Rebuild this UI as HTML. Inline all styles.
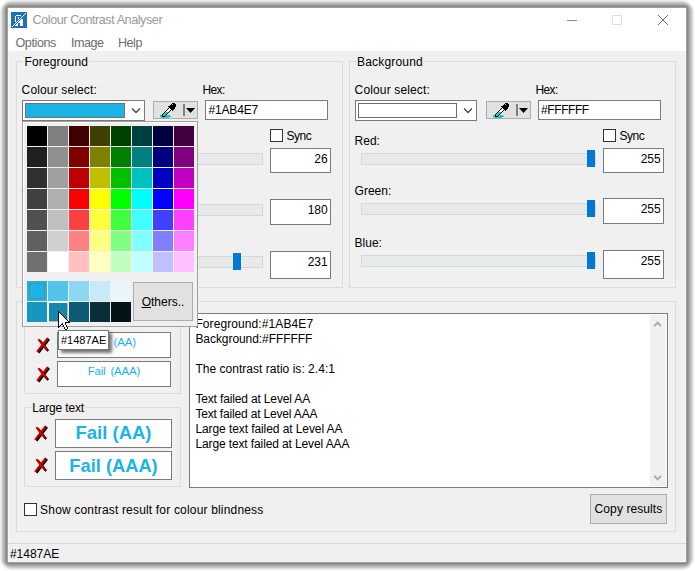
<!DOCTYPE html>
<html><head><meta charset="utf-8"><style>
html,body{margin:0;padding:0;background:#fff;width:695px;height:571px;overflow:hidden;position:relative;font-family:"Liberation Sans",sans-serif;}
.a{position:absolute;}
.t{position:absolute;line-height:1;white-space:nowrap;}
</style></head><body>
<div class="a" style="left:-1px;top:-1px;width:696px;height:572px;background:rgb(250,250,250);border-radius:14.4px;"></div>
<div class="a" style="left:0px;top:0px;width:694px;height:570px;background:rgb(238,238,238);border-radius:12.8px;"></div>
<div class="a" style="left:1px;top:1px;width:692px;height:568px;background:rgb(221,221,221);border-radius:11.2px;"></div>
<div class="a" style="left:2px;top:2px;width:690px;height:566px;background:rgb(202,202,202);border-radius:9.6px;"></div>
<div class="a" style="left:3px;top:3px;width:688px;height:564px;background:rgb(184,184,184);border-radius:8.0px;"></div>
<div class="a" style="left:4px;top:4px;width:686px;height:562px;background:rgb(168,168,168);border-radius:6.4px;"></div>
<div class="a" style="left:5px;top:5px;width:684px;height:560px;background:rgb(153,153,153);border-radius:4.8px;"></div>
<div class="a" style="left:6px;top:6px;width:682px;height:558px;background:rgb(136,136,136);border-radius:3.2px;"></div>
<div class="a" style="left:7px;top:7px;width:680px;height:556px;background:rgb(160,160,160);border-radius:1.6px;"></div>
<div class="a" style="left:8px;top:8px;width:678px;height:554px;background:#f0f0f0;box-shadow:inset 0 0 0 1px #f5f5f5;"></div>
<div class="a" style="left:8px;top:8px;width:678px;height:43px;background:#fff;"></div>
<div class="a" style="left:11px;top:12px;width:16px;height:16px;background:#1f70c1;"></div>
<svg class="a" style="left:11px;top:12px" width="16" height="16" viewBox="0 0 16 16" shape-rendering="crispEdges"><rect x="14" y="1" width="1" height="1" fill="#ffffff"/><rect x="13" y="2" width="1" height="1" fill="#ffffff"/><rect x="5" y="3" width="5" height="1" fill="#ffffff"/><rect x="12" y="3" width="1" height="1" fill="#ffffff"/><rect x="4" y="4" width="1" height="1" fill="#ffffff"/><rect x="11" y="4" width="1" height="1" fill="#ffffff"/><rect x="4" y="5" width="1" height="1" fill="#ffffff"/><rect x="7" y="5" width="1" height="1" fill="#ffffff"/><rect x="10" y="5" width="1" height="1" fill="#ffffff"/><rect x="4" y="6" width="1" height="1" fill="#ffffff"/><rect x="7" y="6" width="1" height="1" fill="#ffffff"/><rect x="9" y="6" width="1" height="1" fill="#ffffff"/><rect x="4" y="7" width="1" height="1" fill="#ffffff"/><rect x="8" y="7" width="1" height="1" fill="#ffffff"/><rect x="10" y="7" width="2" height="1" fill="#ffffff"/><rect x="4" y="8" width="1" height="1" fill="#ffffff"/><rect x="7" y="8" width="1" height="1" fill="#ffffff"/><rect x="9" y="8" width="3" height="1" fill="#ffffff"/><rect x="4" y="9" width="1" height="1" fill="#ffffff"/><rect x="6" y="9" width="1" height="1" fill="#ffffff"/><rect x="8" y="9" width="4" height="1" fill="#ffffff"/><rect x="5" y="10" width="1" height="1" fill="#ffffff"/><rect x="7" y="10" width="5" height="1" fill="#ffffff"/><rect x="4" y="11" width="1" height="1" fill="#ffffff"/><rect x="6" y="11" width="1" height="1" fill="#ffffff"/><rect x="9" y="11" width="3" height="1" fill="#ffffff"/><rect x="3" y="12" width="1" height="1" fill="#ffffff"/><rect x="5" y="12" width="2" height="1" fill="#ffffff"/><rect x="9" y="12" width="3" height="1" fill="#ffffff"/><rect x="2" y="13" width="1" height="1" fill="#ffffff"/><rect x="4" y="13" width="3" height="1" fill="#ffffff"/><rect x="9" y="13" width="3" height="1" fill="#ffffff"/><rect x="1" y="14" width="1" height="1" fill="#ffffff"/></svg>
<div class="t" style="left:32.6px;top:13.63px;font-size:12.6px;color:#9a9a9a;letter-spacing:-0.435px;">Colour Contrast Analyser</div>
<div class="t" style="left:15.4px;top:36.73px;font-size:12.6px;color:#6d6d6d;letter-spacing:-0.400px;">Options</div>
<div class="t" style="left:71.1px;top:36.73px;font-size:12.6px;color:#6d6d6d;letter-spacing:-0.550px;">Image</div>
<div class="t" style="left:118px;top:36.73px;font-size:12.6px;color:#6d6d6d;letter-spacing:-0.500px;">Help</div>
<div class="a" style="left:567px;top:20px;width:10px;height:1px;background:#8a8a8a;"></div>
<div class="a" style="left:612px;top:15px;width:10px;height:10px;border:1px solid #dedede;box-sizing:border-box;"></div>
<svg class="a" style="left:657px;top:14px" width="12" height="12" viewBox="0 0 12 12"><path d="M1 1L11 11M11 1L1 11" stroke="#6e6e6e" stroke-width="1"/></svg>
<div class="a" style="left:16px;top:61px;width:327px;height:227px;border:1px solid #dcdcdc;box-sizing:border-box;"></div>
<div class="t" style="left:24.4px;top:55.64px;font-size:12px;color:#000;letter-spacing:0.167px;background:#f0f0f0;padding:0 1px;margin-left:-1px;">Foreground</div>
<div class="a" style="left:349px;top:61px;width:327px;height:227px;border:1px solid #dcdcdc;box-sizing:border-box;"></div>
<div class="t" style="left:357.1px;top:55.64px;font-size:12px;color:#000;letter-spacing:0.167px;background:#f0f0f0;padding:0 1px;margin-left:-1px;">Background</div>
<div class="a" style="left:16px;top:301px;width:660px;height:231px;border:1px solid #dcdcdc;box-sizing:border-box;"></div>
<div class="a" style="left:24px;top:315px;width:157px;height:79px;border:1px solid #dcdcdc;box-sizing:border-box;"></div>
<div class="t" style="left:32.2px;top:309.34px;font-size:12px;color:#000;background:#f0f0f0;padding:0 1px;margin-left:-1px;">Normal text</div>
<div class="a" style="left:24px;top:407px;width:157px;height:80px;border:1px solid #dcdcdc;box-sizing:border-box;"></div>
<div class="t" style="left:32.2px;top:401.64px;font-size:12px;color:#000;letter-spacing:-0.156px;background:#f0f0f0;padding:0 1px;margin-left:-1px;">Large text</div>
<div class="t" style="left:21.600000000000023px;top:83.54px;font-size:12px;color:#000;letter-spacing:0.138px;">Colour select:</div>
<div class="t" style="left:202.39999999999998px;top:83.84px;font-size:12px;color:#000;letter-spacing:-0.600px;">Hex:</div>
<div class="a" style="left:22px;top:100px;width:123px;height:21px;background:#fff;border:1px solid #7a7a7a;box-sizing:border-box;"></div>
<div class="a" style="left:25px;top:103px;width:100px;height:15px;background:#1ab4e7;border:1px solid #7a7070;box-sizing:border-box;"></div>
<svg class="a" style="left:131px;top:107px" width="10" height="7" viewBox="0 0 10 7"><path d="M1 1.5L5 5.5L9 1.5" stroke="#444" stroke-width="1.3" fill="none"/></svg>
<div class="a" style="left:153px;top:101px;width:45px;height:18px;background:#e1e1e1;border:1px solid #adadad;box-sizing:border-box;"></div>
<svg class="a" style="left:157px;top:101px" width="22" height="17" viewBox="0 0 22 17" shape-rendering="crispEdges"><rect x="15" y="2" width="3" height="1" fill="#000"/><rect x="14" y="3" width="1" height="1" fill="#000"/><rect x="15" y="3" width="1" height="1" fill="#b0b0b0"/><rect x="16" y="3" width="3" height="1" fill="#000"/><rect x="13" y="4" width="6" height="1" fill="#000"/><rect x="11" y="5" width="8" height="1" fill="#000"/><rect x="12" y="6" width="6" height="1" fill="#000"/><rect x="11" y="7" width="1" height="1" fill="#000"/><rect x="12" y="7" width="1" height="1" fill="#fff"/><rect x="13" y="7" width="5" height="1" fill="#000"/><rect x="10" y="8" width="1" height="1" fill="#000"/><rect x="11" y="8" width="3" height="1" fill="#fff"/><rect x="14" y="8" width="3" height="1" fill="#000"/><rect x="9" y="9" width="1" height="1" fill="#000"/><rect x="10" y="9" width="3" height="1" fill="#fff"/><rect x="13" y="9" width="1" height="1" fill="#000"/><rect x="15" y="9" width="1" height="1" fill="#000"/><rect x="8" y="10" width="1" height="1" fill="#000"/><rect x="9" y="10" width="3" height="1" fill="#fff"/><rect x="12" y="10" width="1" height="1" fill="#000"/><rect x="7" y="11" width="1" height="1" fill="#000"/><rect x="8" y="11" width="3" height="1" fill="#10d0d0"/><rect x="11" y="11" width="1" height="1" fill="#000"/><rect x="6" y="12" width="1" height="1" fill="#000"/><rect x="7" y="12" width="3" height="1" fill="#10d0d0"/><rect x="10" y="12" width="1" height="1" fill="#000"/><rect x="5" y="13" width="1" height="1" fill="#000"/><rect x="6" y="13" width="3" height="1" fill="#10d0d0"/><rect x="9" y="13" width="1" height="1" fill="#000"/><rect x="3" y="14" width="2" height="1" fill="#22c2c2"/><rect x="5" y="14" width="1" height="1" fill="#000"/><rect x="6" y="14" width="2" height="1" fill="#10d0d0"/><rect x="8" y="14" width="1" height="1" fill="#000"/><rect x="9" y="14" width="4" height="1" fill="#22c2c2"/><rect x="3" y="15" width="2" height="1" fill="#22c2c2"/><rect x="5" y="15" width="3" height="1" fill="#000"/><rect x="8" y="15" width="6" height="1" fill="#22c2c2"/><rect x="4" y="16" width="8" height="1" fill="#22c2c2"/></svg>
<div class="a" style="left:183px;top:104px;width:2px;height:12px;background:#808080;"></div>
<svg class="a" style="left:186px;top:108px" width="9" height="5" viewBox="0 0 9 5"><path d="M0 0H9L4.5 5Z" fill="#000"/></svg>
<div class="a" style="left:205px;top:100px;width:123px;height:20px;background:#fff;border:1px solid #7a7a7a;box-sizing:border-box;"></div>
<div class="t" style="left:354.6px;top:83.54px;font-size:12px;color:#000;letter-spacing:0.138px;">Colour select:</div>
<div class="t" style="left:535.4px;top:83.84px;font-size:12px;color:#000;letter-spacing:-0.600px;">Hex:</div>
<div class="a" style="left:355px;top:100px;width:122px;height:21px;background:#fff;border:1px solid #7a7a7a;box-sizing:border-box;"></div>
<div class="a" style="left:358px;top:103px;width:99px;height:15px;background:#ffffff;border:1px solid #6e6e6e;box-sizing:border-box;"></div>
<svg class="a" style="left:463px;top:107px" width="10" height="7" viewBox="0 0 10 7"><path d="M1 1.5L5 5.5L9 1.5" stroke="#444" stroke-width="1.3" fill="none"/></svg>
<div class="a" style="left:486px;top:101px;width:45px;height:18px;background:#e1e1e1;border:1px solid #adadad;box-sizing:border-box;"></div>
<svg class="a" style="left:490px;top:101px" width="22" height="17" viewBox="0 0 22 17" shape-rendering="crispEdges"><rect x="15" y="2" width="3" height="1" fill="#000"/><rect x="14" y="3" width="1" height="1" fill="#000"/><rect x="15" y="3" width="1" height="1" fill="#b0b0b0"/><rect x="16" y="3" width="3" height="1" fill="#000"/><rect x="13" y="4" width="6" height="1" fill="#000"/><rect x="11" y="5" width="8" height="1" fill="#000"/><rect x="12" y="6" width="6" height="1" fill="#000"/><rect x="11" y="7" width="1" height="1" fill="#000"/><rect x="12" y="7" width="1" height="1" fill="#fff"/><rect x="13" y="7" width="5" height="1" fill="#000"/><rect x="10" y="8" width="1" height="1" fill="#000"/><rect x="11" y="8" width="3" height="1" fill="#fff"/><rect x="14" y="8" width="3" height="1" fill="#000"/><rect x="9" y="9" width="1" height="1" fill="#000"/><rect x="10" y="9" width="3" height="1" fill="#fff"/><rect x="13" y="9" width="1" height="1" fill="#000"/><rect x="15" y="9" width="1" height="1" fill="#000"/><rect x="8" y="10" width="1" height="1" fill="#000"/><rect x="9" y="10" width="3" height="1" fill="#fff"/><rect x="12" y="10" width="1" height="1" fill="#000"/><rect x="7" y="11" width="1" height="1" fill="#000"/><rect x="8" y="11" width="3" height="1" fill="#10d0d0"/><rect x="11" y="11" width="1" height="1" fill="#000"/><rect x="6" y="12" width="1" height="1" fill="#000"/><rect x="7" y="12" width="3" height="1" fill="#10d0d0"/><rect x="10" y="12" width="1" height="1" fill="#000"/><rect x="5" y="13" width="1" height="1" fill="#000"/><rect x="6" y="13" width="3" height="1" fill="#10d0d0"/><rect x="9" y="13" width="1" height="1" fill="#000"/><rect x="3" y="14" width="2" height="1" fill="#22c2c2"/><rect x="5" y="14" width="1" height="1" fill="#000"/><rect x="6" y="14" width="2" height="1" fill="#10d0d0"/><rect x="8" y="14" width="1" height="1" fill="#000"/><rect x="9" y="14" width="4" height="1" fill="#22c2c2"/><rect x="3" y="15" width="2" height="1" fill="#22c2c2"/><rect x="5" y="15" width="3" height="1" fill="#000"/><rect x="8" y="15" width="6" height="1" fill="#22c2c2"/><rect x="4" y="16" width="8" height="1" fill="#22c2c2"/></svg>
<div class="a" style="left:516px;top:104px;width:2px;height:12px;background:#808080;"></div>
<svg class="a" style="left:519px;top:108px" width="9" height="5" viewBox="0 0 9 5"><path d="M0 0H9L4.5 5Z" fill="#000"/></svg>
<div class="a" style="left:538px;top:100px;width:123px;height:20px;background:#fff;border:1px solid #7a7a7a;box-sizing:border-box;"></div>
<div class="t" style="left:541.1px;top:103.94px;font-size:12px;color:#000;letter-spacing:-0.433px;">#FFFFFF</div>
<div class="t" style="left:208.5px;top:103.94px;font-size:12px;color:#000;letter-spacing:-0.167px;">#1AB4E7</div>
<div class="t" style="left:21.600000000000023px;top:135.04px;font-size:12px;color:#000;">Red:</div>
<div class="t" style="left:21.600000000000023px;top:185.14px;font-size:12px;color:#000;">Green:</div>
<div class="t" style="left:21.600000000000023px;top:236.84px;font-size:12px;color:#000;">Blue:</div>
<div class="a" style="left:270px;top:129px;width:13px;height:13px;background:#fff;border:1px solid #333;box-sizing:border-box;"></div>
<div class="t" style="left:286.5px;top:130.14px;font-size:12px;color:#000;letter-spacing:-0.467px;">Sync</div>
<div class="a" style="left:28px;top:153px;width:235px;height:12px;background:#e7eaea;border:1px solid #d6d6d6;box-sizing:border-box;"></div>
<div class="a" style="left:51px;top:150px;width:8px;height:17px;background:#0078d7;"></div>
<div class="a" style="left:270px;top:148px;width:61px;height:25px;background:#fff;border:1px solid #7a7a7a;box-sizing:border-box;"></div>
<div class="t" style="right:367.29999999999995px;top:152.64px;font-size:12px;color:#000;">26</div>
<div class="a" style="left:28px;top:204px;width:235px;height:12px;background:#e7eaea;border:1px solid #d6d6d6;box-sizing:border-box;"></div>
<div class="a" style="left:188px;top:201px;width:8px;height:17px;background:#0078d7;"></div>
<div class="a" style="left:270px;top:199px;width:61px;height:26px;background:#fff;border:1px solid #7a7a7a;box-sizing:border-box;"></div>
<div class="t" style="right:367.29999999999995px;top:203.94px;font-size:12px;color:#000;">180</div>
<div class="a" style="left:28px;top:256px;width:235px;height:12px;background:#e7eaea;border:1px solid #d6d6d6;box-sizing:border-box;"></div>
<div class="a" style="left:233px;top:253px;width:8px;height:17px;background:#0078d7;"></div>
<div class="a" style="left:270px;top:251px;width:61px;height:28px;background:#fff;border:1px solid #7a7a7a;box-sizing:border-box;"></div>
<div class="t" style="right:367.29999999999995px;top:255.94px;font-size:12px;color:#000;">231</div>
<div class="t" style="left:354.6px;top:135.04px;font-size:12px;color:#000;">Red:</div>
<div class="t" style="left:354.6px;top:185.14px;font-size:12px;color:#000;">Green:</div>
<div class="t" style="left:354.6px;top:236.84px;font-size:12px;color:#000;">Blue:</div>
<div class="a" style="left:603px;top:129px;width:13px;height:13px;background:#fff;border:1px solid #333;box-sizing:border-box;"></div>
<div class="t" style="left:619.5px;top:130.14px;font-size:12px;color:#000;letter-spacing:-0.467px;">Sync</div>
<div class="a" style="left:361px;top:153px;width:235px;height:12px;background:#e7eaea;border:1px solid #d6d6d6;box-sizing:border-box;"></div>
<div class="a" style="left:587px;top:150px;width:8px;height:17px;background:#0078d7;"></div>
<div class="a" style="left:603px;top:148px;width:61px;height:25px;background:#fff;border:1px solid #7a7a7a;box-sizing:border-box;"></div>
<div class="t" style="right:34.299999999999955px;top:152.64px;font-size:12px;color:#000;">255</div>
<div class="a" style="left:361px;top:203px;width:235px;height:12px;background:#e7eaea;border:1px solid #d6d6d6;box-sizing:border-box;"></div>
<div class="a" style="left:587px;top:200px;width:8px;height:17px;background:#0078d7;"></div>
<div class="a" style="left:603px;top:198px;width:61px;height:26px;background:#fff;border:1px solid #7a7a7a;box-sizing:border-box;"></div>
<div class="t" style="right:34.299999999999955px;top:202.94px;font-size:12px;color:#000;">255</div>
<div class="a" style="left:361px;top:255px;width:235px;height:12px;background:#e7eaea;border:1px solid #d6d6d6;box-sizing:border-box;"></div>
<div class="a" style="left:587px;top:252px;width:8px;height:17px;background:#0078d7;"></div>
<div class="a" style="left:603px;top:250px;width:61px;height:29px;background:#fff;border:1px solid #7a7a7a;box-sizing:border-box;"></div>
<div class="t" style="right:34.299999999999955px;top:254.94px;font-size:12px;color:#000;">255</div>
<svg class="a" style="left:36px;top:337px" width="16" height="18" viewBox="0 0 16 18"><g fill="none" stroke-linecap="butt"><path d="M2.6 2.4L11 13M11.9 1.1L1.3 14.8" stroke="#000" stroke-width="2.3" transform="translate(1.2,1.0)"/><path d="M2.6 2.4L11 13M11.9 1.1L1.3 14.8" stroke="#b80000" stroke-width="2.2"/><path d="M2.6 2.4L11 13M11.9 1.1L1.3 14.8" stroke="#f00000" stroke-width="0.8" transform="translate(-0.55,-0.45)"/></g></svg>
<svg class="a" style="left:36px;top:366px" width="16" height="18" viewBox="0 0 16 18"><g fill="none" stroke-linecap="butt"><path d="M2.6 2.4L11 13M11.9 1.1L1.3 14.8" stroke="#000" stroke-width="2.3" transform="translate(1.2,1.0)"/><path d="M2.6 2.4L11 13M11.9 1.1L1.3 14.8" stroke="#b80000" stroke-width="2.2"/><path d="M2.6 2.4L11 13M11.9 1.1L1.3 14.8" stroke="#f00000" stroke-width="0.8" transform="translate(-0.55,-0.45)"/></g></svg>
<div class="a" style="left:57px;top:332px;width:114px;height:26px;background:#fff;border:1px solid #7a7a7a;box-sizing:border-box;"></div>
<div class="a" style="left:57px;top:361px;width:114px;height:26px;background:#fff;border:1px solid #7a7a7a;box-sizing:border-box;"></div>
<div class="t" style="left:90.9px;top:337.37px;font-size:11.5px;color:#1ab4e7;word-spacing:2.0px;letter-spacing:-0.2px;">Fail (AA)</div>
<div class="t" style="left:87.7px;top:366.47px;font-size:11.5px;color:#1ab4e7;word-spacing:2.0px;letter-spacing:-0.2px;">Fail (AAA)</div>
<svg class="a" style="left:34px;top:425px" width="16" height="18" viewBox="0 0 16 18"><g fill="none" stroke-linecap="butt"><path d="M2.6 2.4L11 13M11.9 1.1L1.3 14.8" stroke="#000" stroke-width="2.3" transform="translate(1.2,1.0)"/><path d="M2.6 2.4L11 13M11.9 1.1L1.3 14.8" stroke="#b80000" stroke-width="2.2"/><path d="M2.6 2.4L11 13M11.9 1.1L1.3 14.8" stroke="#f00000" stroke-width="0.8" transform="translate(-0.55,-0.45)"/></g></svg>
<svg class="a" style="left:34px;top:457px" width="16" height="18" viewBox="0 0 16 18"><g fill="none" stroke-linecap="butt"><path d="M2.6 2.4L11 13M11.9 1.1L1.3 14.8" stroke="#000" stroke-width="2.3" transform="translate(1.2,1.0)"/><path d="M2.6 2.4L11 13M11.9 1.1L1.3 14.8" stroke="#b80000" stroke-width="2.2"/><path d="M2.6 2.4L11 13M11.9 1.1L1.3 14.8" stroke="#f00000" stroke-width="0.8" transform="translate(-0.55,-0.45)"/></g></svg>
<div class="a" style="left:55px;top:419px;width:117px;height:29px;background:#fff;border:1px solid #7a7a7a;box-sizing:border-box;"></div>
<div class="a" style="left:55px;top:451px;width:117px;height:29px;background:#fff;border:1px solid #7a7a7a;box-sizing:border-box;"></div>
<div class="t" style="left:55.0px;width:117px;text-align:center;top:424.44px;font-size:18.5px;color:#1ab4e7;font-weight:bold;">Fail (AA)</div>
<div class="t" style="left:55.0px;width:117px;text-align:center;top:456.51px;font-size:18.3px;color:#1ab4e7;font-weight:bold;">Fail (AAA)</div>
<div class="a" style="left:189px;top:313px;width:479px;height:175px;background:#fff;border:1px solid #7a7a7a;box-sizing:border-box;"></div>
<div class="a" style="left:650px;top:315px;width:16px;height:171px;background:#f0f0f0;"></div>
<svg class="a" style="left:653px;top:320px" width="9" height="8" viewBox="0 0 9 8"><path d="M1.3 6.2L4.6 2.6L7.9 6.2" stroke="#a6a6a6" stroke-width="1.8" fill="none"/></svg>
<svg class="a" style="left:653px;top:474px" width="9" height="8" viewBox="0 0 9 8"><path d="M1.3 1.8L4.6 5.4L7.9 1.8" stroke="#a6a6a6" stroke-width="1.8" fill="none"/></svg>
<div class="t" style="left:195.4px;top:317.64px;font-size:12px;color:#000;letter-spacing:0.094px;">Foreground:#1AB4E7</div>
<div class="t" style="left:195.4px;top:332.64px;font-size:12px;color:#000;letter-spacing:-0.059px;">Background:#FFFFFF</div>
<div class="t" style="left:195.4px;top:362.64px;font-size:12px;color:#000;letter-spacing:0.030px;">The contrast ratio is: 2.4:1</div>
<div class="t" style="left:195.4px;top:392.64px;font-size:12px;color:#000;letter-spacing:-0.150px;">Text failed at Level AA</div>
<div class="t" style="left:195.4px;top:407.64px;font-size:12px;color:#000;letter-spacing:-0.174px;">Text failed at Level AAA</div>
<div class="t" style="left:195.4px;top:422.64px;font-size:12px;color:#000;letter-spacing:-0.082px;">Large text failed at Level AA</div>
<div class="t" style="left:195.4px;top:437.64px;font-size:12px;color:#000;letter-spacing:-0.117px;">Large text failed at Level AAA</div>
<div class="a" style="left:590px;top:494px;width:77px;height:30px;background:#e1e1e1;border:1px solid #adadad;box-sizing:border-box;"></div>
<div class="t" style="left:590.0px;width:77px;text-align:center;top:502.84px;font-size:12px;color:#000;letter-spacing:0.091px;">Copy results</div>
<div class="a" style="left:24px;top:503px;width:13px;height:13px;background:#fff;border:1px solid #333;box-sizing:border-box;"></div>
<div class="t" style="left:40.1px;top:504.04px;font-size:12px;color:#000;letter-spacing:0.177px;">Show contrast result for colour blindness</div>
<div class="a" style="left:8px;top:543px;width:678px;height:1px;background:#d7d7d7;"></div>
<div class="t" style="left:9.9px;top:547.74px;font-size:12px;color:#000;">#1487AE</div>
<div class="a" style="left:22px;top:121px;width:176px;height:206px;background:#f0f0f0;border:1px solid #a0a0a0;box-sizing:border-box;box-shadow:inset 1px 1px 0 #fff;"></div>
<div class="a" style="left:27px;top:126px;width:20px;height:20px;background:#000000;"></div>
<div class="a" style="left:48px;top:126px;width:20px;height:20px;background:#808080;"></div>
<div class="a" style="left:69px;top:126px;width:20px;height:20px;background:#400000;"></div>
<div class="a" style="left:90px;top:126px;width:20px;height:20px;background:#404000;"></div>
<div class="a" style="left:111px;top:126px;width:20px;height:20px;background:#004000;"></div>
<div class="a" style="left:132px;top:126px;width:20px;height:20px;background:#004040;"></div>
<div class="a" style="left:153px;top:126px;width:20px;height:20px;background:#000040;"></div>
<div class="a" style="left:174px;top:126px;width:20px;height:20px;background:#400040;"></div>
<div class="a" style="left:27px;top:147px;width:20px;height:20px;background:#202020;"></div>
<div class="a" style="left:48px;top:147px;width:20px;height:20px;background:#909090;"></div>
<div class="a" style="left:69px;top:147px;width:20px;height:20px;background:#800000;"></div>
<div class="a" style="left:90px;top:147px;width:20px;height:20px;background:#808000;"></div>
<div class="a" style="left:111px;top:147px;width:20px;height:20px;background:#008000;"></div>
<div class="a" style="left:132px;top:147px;width:20px;height:20px;background:#008080;"></div>
<div class="a" style="left:153px;top:147px;width:20px;height:20px;background:#000080;"></div>
<div class="a" style="left:174px;top:147px;width:20px;height:20px;background:#800080;"></div>
<div class="a" style="left:27px;top:168px;width:20px;height:20px;background:#303030;"></div>
<div class="a" style="left:48px;top:168px;width:20px;height:20px;background:#a0a0a0;"></div>
<div class="a" style="left:69px;top:168px;width:20px;height:20px;background:#c00000;"></div>
<div class="a" style="left:90px;top:168px;width:20px;height:20px;background:#c0c000;"></div>
<div class="a" style="left:111px;top:168px;width:20px;height:20px;background:#00c000;"></div>
<div class="a" style="left:132px;top:168px;width:20px;height:20px;background:#00c0c0;"></div>
<div class="a" style="left:153px;top:168px;width:20px;height:20px;background:#0000c0;"></div>
<div class="a" style="left:174px;top:168px;width:20px;height:20px;background:#c000c0;"></div>
<div class="a" style="left:27px;top:189px;width:20px;height:20px;background:#404040;"></div>
<div class="a" style="left:48px;top:189px;width:20px;height:20px;background:#b0b0b0;"></div>
<div class="a" style="left:69px;top:189px;width:20px;height:20px;background:#ff0000;"></div>
<div class="a" style="left:90px;top:189px;width:20px;height:20px;background:#ffff00;"></div>
<div class="a" style="left:111px;top:189px;width:20px;height:20px;background:#00ff00;"></div>
<div class="a" style="left:132px;top:189px;width:20px;height:20px;background:#00ffff;"></div>
<div class="a" style="left:153px;top:189px;width:20px;height:20px;background:#0000ff;"></div>
<div class="a" style="left:174px;top:189px;width:20px;height:20px;background:#ff00ff;"></div>
<div class="a" style="left:27px;top:210px;width:20px;height:20px;background:#505050;"></div>
<div class="a" style="left:48px;top:210px;width:20px;height:20px;background:#c0c0c0;"></div>
<div class="a" style="left:69px;top:210px;width:20px;height:20px;background:#ff4040;"></div>
<div class="a" style="left:90px;top:210px;width:20px;height:20px;background:#ffff40;"></div>
<div class="a" style="left:111px;top:210px;width:20px;height:20px;background:#40ff40;"></div>
<div class="a" style="left:132px;top:210px;width:20px;height:20px;background:#40ffff;"></div>
<div class="a" style="left:153px;top:210px;width:20px;height:20px;background:#4040ff;"></div>
<div class="a" style="left:174px;top:210px;width:20px;height:20px;background:#ff40ff;"></div>
<div class="a" style="left:27px;top:231px;width:20px;height:20px;background:#606060;"></div>
<div class="a" style="left:48px;top:231px;width:20px;height:20px;background:#d0d0d0;"></div>
<div class="a" style="left:69px;top:231px;width:20px;height:20px;background:#ff8080;"></div>
<div class="a" style="left:90px;top:231px;width:20px;height:20px;background:#ffff80;"></div>
<div class="a" style="left:111px;top:231px;width:20px;height:20px;background:#80ff80;"></div>
<div class="a" style="left:132px;top:231px;width:20px;height:20px;background:#80ffff;"></div>
<div class="a" style="left:153px;top:231px;width:20px;height:20px;background:#8080ff;"></div>
<div class="a" style="left:174px;top:231px;width:20px;height:20px;background:#ff80ff;"></div>
<div class="a" style="left:27px;top:252px;width:20px;height:20px;background:#707070;"></div>
<div class="a" style="left:48px;top:252px;width:20px;height:20px;background:#ffffff;"></div>
<div class="a" style="left:69px;top:252px;width:20px;height:20px;background:#ffc0c0;"></div>
<div class="a" style="left:90px;top:252px;width:20px;height:20px;background:#ffffc0;"></div>
<div class="a" style="left:111px;top:252px;width:20px;height:20px;background:#c0ffc0;"></div>
<div class="a" style="left:132px;top:252px;width:20px;height:20px;background:#c0ffff;"></div>
<div class="a" style="left:153px;top:252px;width:20px;height:20px;background:#c0c0ff;"></div>
<div class="a" style="left:174px;top:252px;width:20px;height:20px;background:#ffc0ff;"></div>
<div class="a" style="left:27px;top:281px;width:20px;height:20px;background:#1ab4e7;"></div>
<div class="a" style="left:48px;top:281px;width:20px;height:20px;background:#52c4ec;"></div>
<div class="a" style="left:69px;top:281px;width:20px;height:20px;background:#8dd7f2;"></div>
<div class="a" style="left:90px;top:281px;width:20px;height:20px;background:#c6eaf7;"></div>
<div class="a" style="left:111px;top:281px;width:20px;height:20px;background:#e8f6fc;"></div>
<div class="a" style="left:27px;top:302px;width:20px;height:20px;background:#1796c2;"></div>
<div class="a" style="left:47px;top:301px;width:21px;height:21px;background:#fff;"></div>
<div class="a" style="left:49px;top:303px;width:19px;height:19px;background:#b9b4b4;"></div>
<div class="a" style="left:49px;top:303px;width:18px;height:18px;background:#1487ae;"></div>
<div class="a" style="left:69px;top:302px;width:20px;height:20px;background:#0f5b75;"></div>
<div class="a" style="left:90px;top:302px;width:20px;height:20px;background:#0a2d3a;"></div>
<div class="a" style="left:111px;top:302px;width:20px;height:20px;background:#041318;"></div>
<div class="a" style="left:29px;top:283px;width:16px;height:16px;border:1px dotted #c8552a;box-sizing:border-box;border-radius:2px;"></div>
<div class="a" style="left:133px;top:282px;width:60px;height:39px;background:#e1e1e1;border:1px solid #adadad;box-sizing:border-box;"></div>
<div class="t" style="left:133.0px;width:60px;text-align:center;top:295.54px;font-size:12px;color:#000;"><u>O</u>thers..</div>
<div class="a" style="left:58px;top:330px;width:51px;height:20px;background:#fff;border:1px solid #767676;box-sizing:border-box;box-shadow:3px 3px 3px rgba(0,0,0,0.55);"></div>
<div class="t" style="left:61px;top:335.19px;font-size:11px;color:#000;">#1487AE</div>
<svg class="a" style="left:58px;top:311px" width="12" height="19" viewBox="0 0 12 19" shape-rendering="crispEdges"><rect x="0" y="0" width="1" height="1" fill="#000"/><rect x="0" y="1" width="2" height="1" fill="#000"/><rect x="0" y="2" width="1" height="1" fill="#000"/><rect x="1" y="2" width="1" height="1" fill="#fff"/><rect x="2" y="2" width="1" height="1" fill="#000"/><rect x="0" y="3" width="1" height="1" fill="#000"/><rect x="1" y="3" width="2" height="1" fill="#fff"/><rect x="3" y="3" width="1" height="1" fill="#000"/><rect x="0" y="4" width="1" height="1" fill="#000"/><rect x="1" y="4" width="3" height="1" fill="#fff"/><rect x="4" y="4" width="1" height="1" fill="#000"/><rect x="0" y="5" width="1" height="1" fill="#000"/><rect x="1" y="5" width="4" height="1" fill="#fff"/><rect x="5" y="5" width="1" height="1" fill="#000"/><rect x="0" y="6" width="1" height="1" fill="#000"/><rect x="1" y="6" width="5" height="1" fill="#fff"/><rect x="6" y="6" width="1" height="1" fill="#000"/><rect x="0" y="7" width="1" height="1" fill="#000"/><rect x="1" y="7" width="6" height="1" fill="#fff"/><rect x="7" y="7" width="1" height="1" fill="#000"/><rect x="0" y="8" width="1" height="1" fill="#000"/><rect x="1" y="8" width="7" height="1" fill="#fff"/><rect x="8" y="8" width="1" height="1" fill="#000"/><rect x="0" y="9" width="1" height="1" fill="#000"/><rect x="1" y="9" width="8" height="1" fill="#fff"/><rect x="9" y="9" width="1" height="1" fill="#000"/><rect x="0" y="10" width="1" height="1" fill="#000"/><rect x="1" y="10" width="9" height="1" fill="#fff"/><rect x="10" y="10" width="1" height="1" fill="#000"/><rect x="0" y="11" width="1" height="1" fill="#000"/><rect x="1" y="11" width="6" height="1" fill="#fff"/><rect x="7" y="11" width="5" height="1" fill="#000"/><rect x="0" y="12" width="1" height="1" fill="#000"/><rect x="1" y="12" width="3" height="1" fill="#fff"/><rect x="4" y="12" width="1" height="1" fill="#000"/><rect x="5" y="12" width="2" height="1" fill="#fff"/><rect x="7" y="12" width="1" height="1" fill="#000"/><rect x="0" y="13" width="1" height="1" fill="#000"/><rect x="1" y="13" width="2" height="1" fill="#fff"/><rect x="3" y="13" width="2" height="1" fill="#000"/><rect x="5" y="13" width="2" height="1" fill="#fff"/><rect x="7" y="13" width="1" height="1" fill="#000"/><rect x="0" y="14" width="1" height="1" fill="#000"/><rect x="1" y="14" width="1" height="1" fill="#fff"/><rect x="2" y="14" width="1" height="1" fill="#000"/><rect x="5" y="14" width="1" height="1" fill="#000"/><rect x="6" y="14" width="2" height="1" fill="#fff"/><rect x="8" y="14" width="1" height="1" fill="#000"/><rect x="0" y="15" width="2" height="1" fill="#000"/><rect x="5" y="15" width="1" height="1" fill="#000"/><rect x="6" y="15" width="2" height="1" fill="#fff"/><rect x="8" y="15" width="1" height="1" fill="#000"/><rect x="0" y="16" width="1" height="1" fill="#000"/><rect x="6" y="16" width="1" height="1" fill="#000"/><rect x="7" y="16" width="2" height="1" fill="#fff"/><rect x="9" y="16" width="1" height="1" fill="#000"/><rect x="6" y="17" width="1" height="1" fill="#000"/><rect x="7" y="17" width="2" height="1" fill="#fff"/><rect x="9" y="17" width="1" height="1" fill="#000"/><rect x="7" y="18" width="2" height="1" fill="#000"/></svg>

</body></html>
